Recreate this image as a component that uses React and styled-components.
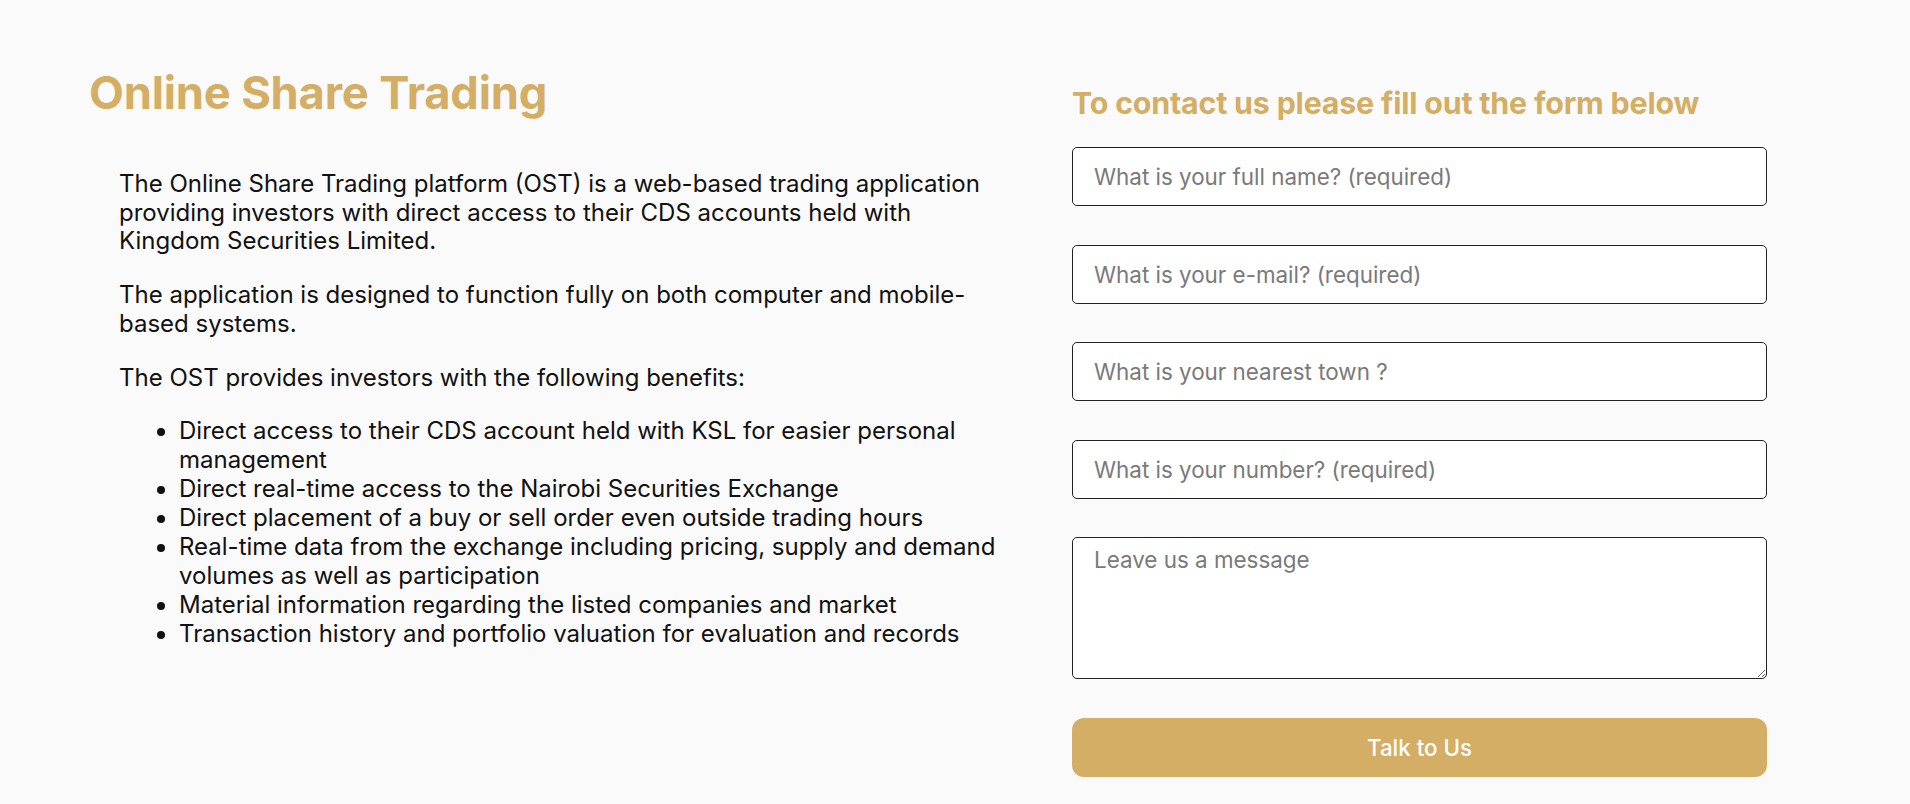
import React from "react";
import styled, { createGlobalStyle } from "styled-components";

const gold = "#d4ae64";

const GlobalStyle = createGlobalStyle`
  * { box-sizing: border-box; }
  body {
    margin: 0;
    background: #fafafa;
    font-family: Inter, "Noto Sans", Arial, sans-serif;
    color: #111;
  }
`;

const Page = styled.main`
  display: grid;
  grid-template-columns: 919px 695px;
  column-gap: 64px;
  padding: 66px 0 28px 89px;
  min-height: 804px;
`;

const Info = styled.section`
  display: flex;
  flex-direction: column;
`;

const Title = styled.h1`
  margin: 0 0 50px;
  font-size: 45.3px;
  line-height: 54px;
  font-weight: 700;
  color: ${gold};
  letter-spacing: -0.2px;
`;

const Body = styled.div`
  padding-left: 30px;
  font-size: 24px;
  line-height: 28.7px;
`;

const Para = styled.p`
  margin: 0 0 25px;
`;

const Benefits = styled.ul`
  margin: 0;
  padding-left: 60px;
  list-style: disc;
  line-height: 28.9px;
`;

const Contact = styled.section`
  display: flex;
  flex-direction: column;
  padding-top: 19px;
`;

const FormTitle = styled.h2`
  margin: 0 0 26px;
  font-size: 30.4px;
  line-height: 36px;
  font-weight: 700;
  color: ${gold};
  letter-spacing: -0.2px;
`;

const Form = styled.form`
  display: flex;
  flex-direction: column;
  gap: 38.5px;
`;

const fieldBase = `
  width: 100%;
  border: 1px solid #222;
  border-radius: 5px;
  background: #fff;
  font-family: Inter, "Noto Sans", Arial, sans-serif;
  font-size: 22.4px;
  color: #111;
  padding: 0 21px;
  outline: none;
  &::placeholder { color: #7a7a7a; }
`;

const Field = styled.input`
  ${fieldBase}
  height: 59px;
`;

const Message = styled.textarea`
  ${fieldBase}
  height: 142px;
  padding-top: 8px;
  line-height: 28px;
  resize: vertical;
`;

const Submit = styled.button`
  height: 59px;
  border: none;
  border-radius: 12px;
  background: ${gold};
  color: #fff;
  font-family: Inter, "Noto Sans", Arial, sans-serif;
  font-size: 22.3px;
  font-weight: 500;
  cursor: pointer;
`;

const benefits = [
  "Direct access to their CDS account held with KSL for easier personal management",
  "Direct real-time access to the Nairobi Securities Exchange",
  "Direct placement of a buy or sell order even outside trading hours",
  "Real-time data from the exchange including pricing, supply and demand volumes as well as participation",
  "Material information regarding the listed companies and market",
  "Transaction history and portfolio valuation for evaluation and records",
];

export default function App() {
  return (
    <>
      <GlobalStyle />
      <Page>
        <Info>
          <Title>Online Share Trading</Title>
          <Body>
            <Para>
              The Online Share Trading platform (OST) is a web-based trading application
              providing investors with direct access to their CDS accounts held with
              Kingdom Securities Limited.
            </Para>
            <Para>
              The application is designed to function fully on both computer and
              mobile-based systems.
            </Para>
            <Para>The OST provides investors with the following benefits:</Para>
            <Benefits>
              {benefits.map((b) => (
                <li key={b}>{b}</li>
              ))}
            </Benefits>
          </Body>
        </Info>
        <Contact>
          <FormTitle>To contact us please fill out the form below</FormTitle>
          <Form onSubmit={(e) => e.preventDefault()}>
            <Field placeholder="What is your full name? (required)" />
            <Field placeholder="What is your e-mail? (required)" />
            <Field placeholder="What is your nearest town ?" />
            <Field placeholder="What is your number? (required)" />
            <Message placeholder="Leave us a message" />
            <Submit type="submit">Talk to Us</Submit>
          </Form>
        </Contact>
      </Page>
    </>
  );
}
